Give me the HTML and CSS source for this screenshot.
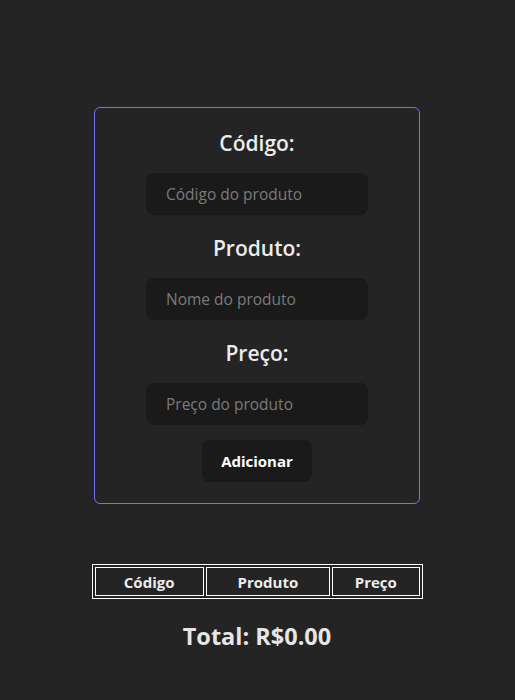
FILE: index.html
```html
<!DOCTYPE html>
<html lang="pt-BR">
<head>
<meta charset="utf-8">
<title>Produtos</title>
<link rel="stylesheet" href="styles.css">
</head>
<body>
<main class="page">
  <form class="card">
    <label class="field-label" for="codigo">Código:</label>
    <input class="field-input" id="codigo" type="text" placeholder="Código do produto">
    <label class="field-label" for="produto">Produto:</label>
    <input class="field-input" id="produto" type="text" placeholder="Nome do produto">
    <label class="field-label" for="preco">Preço:</label>
    <input class="field-input" id="preco" type="text" placeholder="Preço do produto">
    <button class="add-btn" type="button">Adicionar</button>
  </form>
  <table class="products">
    <thead>
      <tr>
        <th class="col-code">Código</th>
        <th class="col-name">Produto</th>
        <th class="col-price">Preço</th>
      </tr>
    </thead>
    <tbody></tbody>
  </table>
  <h2 class="total">Total: R$0.00</h2>
</main>
</body>
</html>
```
FILE: styles.css
```css
html, body {
  margin: 0;
  padding: 0;
  background: #242424;
  color: rgba(255, 255, 255, 0.87);
  font-family: "Open Sans", "Noto Sans", sans-serif;
}

.page {
  display: flex;
  flex-direction: column;
  align-items: center;
  padding-top: 107px;
  padding-right: 1px;
}

.card {
  box-sizing: border-box;
  width: 326px;
  height: 397px;
  border: 1px solid #7074f2;
  border-radius: 6px;
  display: flex;
  flex-direction: column;
  align-items: center;
  padding-top: 21px;
}

.field-label {
  font-size: 21px;
  font-weight: 600;
  line-height: 28px;
  color: #ececec;
  margin-bottom: 16px;
}

.field-input {
  box-sizing: border-box;
  width: 222px;
  height: 42px;
  border: none;
  border-radius: 8px;
  background: #1a1a1a;
  padding: 0 20px;
  font-family: inherit;
  font-size: 15.5px;
  color: #ddd;
  margin-bottom: 19px;
  outline: none;
}

.field-input::placeholder {
  color: #7a7a7a;
}

.field-input:nth-of-type(3) {
  margin-bottom: 15px;
}

.add-btn {
  box-sizing: border-box;
  width: 110px;
  height: 42px;
  border: none;
  border-radius: 8px;
  background: #1a1a1a;
  color: #fff;
  font-family: inherit;
  font-size: 15px;
  font-weight: 700;
  cursor: pointer;
}

.products {
  margin-top: 60px;
  border: 1px solid #fff;
  border-spacing: 2px;
  width: 331px;
}

.products th {
  border: 1px solid #fff;
  height: 27px;
  padding: 0;
  font-size: 15px;
  font-weight: 700;
  color: #ececec;
}

.col-code { width: 108px; }
.col-name { width: 123px; }
.col-price { width: 86px; }

.total {
  margin: 22px 0 0;
  font-size: 23.5px;
  font-weight: 700;
  line-height: 30px;
  color: #e6e6e6;
}
```
